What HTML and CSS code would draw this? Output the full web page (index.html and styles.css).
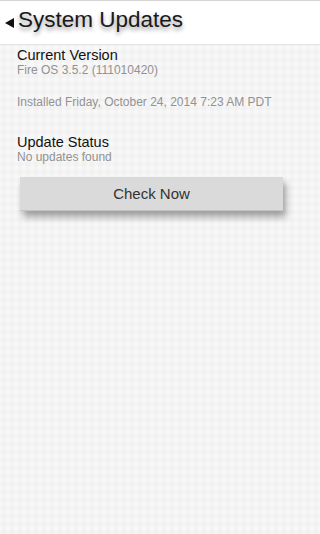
FILE: index.html
```html
<!DOCTYPE html>
<html>
<head>
<meta charset="utf-8">
<link rel="stylesheet" href="styles.css">
</head>
<body>
<header class="topbar">
  <svg class="back" width="9" height="10" viewBox="0 0 9 10"><path d="M0 5 L9 0 L9 10 Z" fill="#111"/></svg>
  <h1 class="title">System Updates</h1>
</header>
<main class="content">
  <section class="group">
    <h2 class="label">Current Version</h2>
    <p class="sub">Fire OS 3.5.2 (111010420)</p>
    <p class="sub installed">Installed Friday, October 24, 2014 7:23 AM PDT</p>
  </section>
  <section class="group status">
    <h2 class="label">Update Status</h2>
    <p class="sub">No updates found</p>
  </section>
  <button class="check">Check Now</button>
</main>
</body>
</html>
```

FILE: styles.css
```css
html, body {
  margin: 0;
  padding: 0;
}
html {
  background-color: #f4f4f4;
}
body {
  min-height: 534px;
  overflow: hidden;
  font-family: "Liberation Sans", Arial, sans-serif;
  background-color: #f4f4f4;
  background-image:
    radial-gradient(circle at 50% 50%, rgba(0,0,0,0.012) 0 2px, transparent 3px),
    radial-gradient(circle at 50% 50%, rgba(255,255,255,0.35) 0 2px, transparent 3px);
  background-size: 8px 8px, 8px 8px;
  background-position: 0 0, 4px 4px;
}
.topbar {
  display: flex;
  align-items: flex-start;
  gap: 4px;
  height: 43px;
  padding-left: 5px;
  background: #fff;
  border-top: 1px solid #d4d4d4;
  border-bottom: 1px solid #e2e2e2;
}
.back {
  margin-top: 17px;
  flex: none;
}
.title {
  margin: 0;
  font-size: 22.5px;
  font-weight: normal;
  line-height: 38px;
  color: #1a1a1a;
  text-shadow: 0 3px 4px rgba(0,0,0,0.4);
}
.content {
  padding: 2px 17px 0 17px;
  display: flex;
  flex-direction: column;
  align-items: flex-start;
}
.label {
  margin: 0;
  font-size: 14.5px;
  font-weight: normal;
  line-height: 16px;
  color: #111;
}
.sub {
  margin: 0;
  font-size: 12px;
  line-height: 15px;
  color: #929292;
}
.installed {
  margin-top: 17px;
}
.status {
  margin-top: 24px;
}
.check {
  margin: 12px 0 0 3px;
  width: 263px;
  height: 34px;
  padding: 0;
  border: none;
  border-bottom: 1px solid #c4c4c4;
  background: #dadada;
  font-family: "Liberation Sans", Arial, sans-serif;
  font-size: 15px;
  color: #333;
  box-shadow: 3px 6px 7px rgba(0,0,0,0.35);
}
```
